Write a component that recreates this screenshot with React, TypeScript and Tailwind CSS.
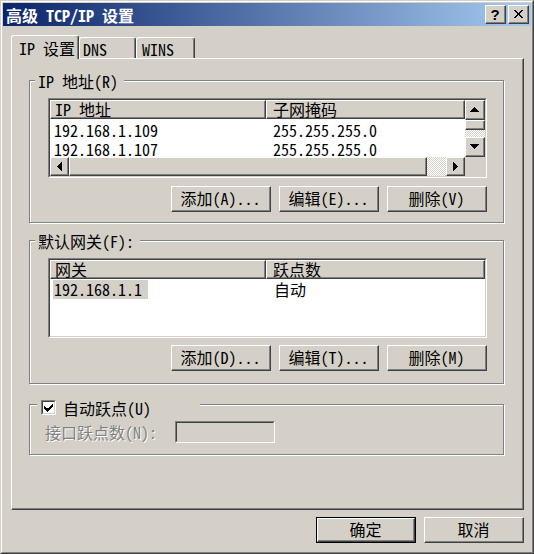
import React from "react";

const FONT = "font-['Noto_Sans_Mono_CJK_SC','Noto_Sans_CJK_SC',monospace]";

type Kids = { className?: string; inner?: string; children?: React.ReactNode };

/* Classic 3D raised frame (buttons, headers, scroll thumbs) */
function Raised({ className = "", inner = "", children }: Kids) {
  return (
    <div
      className={`border border-t-white border-l-white border-r-[#404040] border-b-[#404040] bg-[#d4d0c8] ${className}`}
    >
      <div className={`h-full w-full border-r border-b border-r-[#808080] border-b-[#808080] ${inner}`}>
        {children}
      </div>
    </div>
  );
}

/* Classic 3D sunken frame (list views, edit boxes, check boxes) */
function Sunken({ className = "", inner = "", children }: Kids) {
  return (
    <div
      className={`border border-t-[#808080] border-l-[#808080] border-r-white border-b-white ${className}`}
    >
      <div
        className={`h-full w-full overflow-hidden border border-t-[#404040] border-l-[#404040] border-r-[#d4d0c8] border-b-[#d4d0c8] ${inner}`}
      >
        {children}
      </div>
    </div>
  );
}

function Arrow({ dir }: { dir: "up" | "down" | "left" | "right" }) {
  const paths: Record<string, string> = {
    up: "M4 0h1v1h-1z M3 1h3v1h-3z M2 2h5v1h-5z M1 3h7v1h-7z M0 4h9v1h-9z",
    down: "M0 0h9v1h-9z M1 1h7v1h-7z M2 2h5v1h-5z M3 3h3v1h-3z M4 4h1v1h-1z",
    left: "M4 0h1v9h-1z M3 1h1v7h-1z M2 2h1v5h-1z M1 3h1v3h-1z M0 4h1v1h-1z",
    right: "M0 0h1v9h-1z M1 1h1v7h-1z M2 2h1v5h-1z M3 3h1v3h-1z M4 4h1v1h-1z",
  };
  const horiz = dir === "up" || dir === "down";
  return (
    <svg
      width={horiz ? 9 : 5}
      height={horiz ? 5 : 9}
      viewBox={horiz ? "0 0 9 5" : "0 0 5 9"}
      shapeRendering="crispEdges"
    >
      <path d={paths[dir]} fill="#000" />
    </svg>
  );
}

function Checker({ className = "" }: { className?: string }) {
  return (
    <div
      className={`[background-image:repeating-conic-gradient(#ffffff_0_25%,#d4d0c8_0_50%)] [background-size:2px_2px] ${className}`}
    />
  );
}

function Button({ label, isDefault = false }: { label: string; isDefault?: boolean }) {
  if (isDefault) {
    return (
      <div className="h-[26px] w-[100px] border border-black">
        <Raised className="h-full w-full" inner="flex items-center justify-center pb-px">
          {label}
        </Raised>
      </div>
    );
  }
  return (
    <Raised className="h-[26px] w-[100px]" inner="flex items-center justify-center pb-px">
      {label}
    </Raised>
  );
}

function HeaderCell({ text, className = "", pad = "pl-[4px]" }: { text: string; className?: string; pad?: string }) {
  return (
    <Raised className={`h-[19px] ${className}`} inner={`flex items-center whitespace-pre ${pad}`}>
      <span className="leading-[15px]">{text}</span>
    </Raised>
  );
}

function Group({
  label,
  className = "",
  children,
}: {
  label: React.ReactNode;
  className?: string;
  children?: React.ReactNode;
}) {
  return (
    <div
      className={`relative shrink-0 border border-[#808080] shadow-[1px_1px_0_#ffffff,inset_1px_1px_0_#ffffff] ${className}`}
    >
      {label}
      {children}
    </div>
  );
}

function GroupLabel({ text }: { text: string }) {
  return (
    <div className="absolute left-[5px] top-[-9px] flex h-[18px] items-center bg-[#d4d0c8] pl-[3px] pr-[6px] whitespace-pre">
      {text}
    </div>
  );
}

function AddressList() {
  return (
    <Sunken className="h-[80px] w-[439px]">
      <div className="flex h-full">
        <div className="flex w-[415px] flex-col">
          <div className="h-[57px] overflow-hidden bg-white">
            <div className="flex">
              <HeaderCell text="IP 地址" className="w-[216px]" />
              <HeaderCell text="子网掩码" className="w-[199px]" pad="pl-[6px]" />
            </div>
            <div className="pt-[2px]">
              {[
                ["192.168.1.109", "255.255.255.0"],
                ["192.168.1.107", "255.255.255.0"],
              ].map(([ip, mask]) => (
                <div key={ip} className="flex h-[19px] items-center leading-[15px]">
                  <div className="w-[216px] pl-[4px]">{ip}</div>
                  <div className="pl-[7px]">{mask}</div>
                </div>
              ))}
            </div>
          </div>
          {/* horizontal scroll bar */}
          <div className="flex h-[19px]">
            <Raised className="h-full w-[19px]" inner="flex items-center justify-center">
              <Arrow dir="left" />
            </Raised>
            <Raised className="h-full w-[358px]" />
            <Checker className="h-full flex-1" />
            <Raised className="h-full w-[19px]" inner="flex items-center justify-center">
              <Arrow dir="right" />
            </Raised>
          </div>
        </div>
        {/* vertical scroll bar */}
        <div className="flex w-[20px] flex-col">
          <Raised className="h-[20px] w-full" inner="flex items-center justify-center">
            <Arrow dir="up" />
          </Raised>
          <Raised className="h-[10px] w-full" />
          <Checker className="h-[7px] w-full" />
          <Raised className="h-[20px] w-full" inner="flex items-center justify-center">
            <Arrow dir="down" />
          </Raised>
          <div className="flex-1 bg-[#d4d0c8]" />
        </div>
      </div>
    </Sunken>
  );
}

function GatewayList() {
  return (
    <Sunken className="h-[80px] w-[439px]">
      <div className="h-full bg-white">
        <div className="flex">
          <HeaderCell text="网关" className="w-[216px]" />
          <HeaderCell text="跃点数" className="flex-1" pad="pl-[6px]" />
        </div>
        <div className="mt-px flex h-[19px] items-center leading-[15px]">
          <div className="w-[216px] pl-[3px]">
            <span className="flex h-[19px] w-fit items-center bg-[#d4d0c8] pl-px pr-[6px]">192.168.1.1</span>
          </div>
          <div className="pl-[8px]">自动</div>
        </div>
      </div>
    </Sunken>
  );
}

function TitleBar() {
  return (
    <div className="flex h-[23px] shrink-0 items-center bg-[linear-gradient(to_right,#0a246a,#a6caf0)] pl-[3px] pr-[2px]">
      <span className="font-bold whitespace-pre text-white">高级 TCP/IP 设置</span>
      <div className="ml-auto flex gap-[2px]">
        <Raised className="h-[19px] w-[21px]" inner="flex items-center justify-center">
          <span className="font-['Liberation_Sans',sans-serif] text-[15px] leading-none font-bold">?</span>
        </Raised>
        <Raised className="h-[19px] w-[21px]" inner="flex items-center justify-center">
          <svg width="9" height="8" viewBox="0 0 9 8" shapeRendering="crispEdges">
            <path
              d="M0 0h2v1h-2z M7 0h2v1h-2z M1 1h2v1h-2z M6 1h2v1h-2z M2 2h2v1h-2z M5 2h2v1h-2z M3 3h3v2h-3z M2 5h2v1h-2z M5 5h2v1h-2z M1 6h2v1h-2z M6 6h2v1h-2z M0 7h2v1h-2z M7 7h2v1h-2z"
              fill="#000"
            />
          </svg>
        </Raised>
      </div>
    </div>
  );
}

function Tabs() {
  const tabBase =
    "rounded-t-[3px] border-t border-l border-r border-t-white border-l-white border-r-[#404040] bg-[#d4d0c8] shadow-[inset_-1px_0_0_#808080] whitespace-pre";
  return (
    <div className="relative z-10 -mb-px ml-[8px] flex h-[24px] shrink-0 items-start">
      <div className={`h-[24px] w-[68px] pt-[3px] pl-[7px] ${tabBase}`}>IP 设置</div>
      <div className={`mt-[2px] h-[21px] w-[57px] pt-[2px] pl-[3px] ${tabBase}`}>DNS</div>
      <div className={`mt-[2px] h-[21px] w-[59px] pt-[2px] pl-[5px] ${tabBase}`}>WINS</div>
    </div>
  );
}

export default function App() {
  return (
    <div
      className={`h-[554px] w-[534px] border border-t-[#d4d0c8] border-l-[#d4d0c8] border-r-[#404040] border-b-[#404040] bg-[#d4d0c8] text-[16px] leading-[18px] text-black ${FONT}`}
    >
      <div className="flex h-full flex-col border border-t-white border-l-white border-r-[#808080] border-b-[#808080] p-px">
        <TitleBar />
        <div className="mt-[9px]" />
        <Tabs />

        {/* tab page */}
        <div className="ml-[8px] flex h-[452px] w-[513px] shrink-0 flex-col border border-t-white border-l-white border-r-[#404040] border-b-[#404040] pt-[21px] pl-[17px] shadow-[inset_-1px_-1px_0_#808080]">
          <Group label={<GroupLabel text="IP 地址(R)" />} className="h-[143px] w-[475px]">
            <div className="flex flex-col pt-[17px] pl-[18px]">
              <AddressList />
              <div className="mt-[8px] flex w-[439px] justify-end gap-[8px]">
                <Button label="添加(A)..." />
                <Button label="编辑(E)..." />
                <Button label="删除(V)" />
              </div>
            </div>
          </Group>

          <Group label={<GroupLabel text="默认网关(F):" />} className="mt-[17px] h-[144px] w-[475px]">
            <div className="flex flex-col pt-[17px] pl-[18px]">
              <GatewayList />
              <div className="mt-[7px] flex w-[439px] justify-end gap-[8px]">
                <Button label="添加(D)..." />
                <Button label="编辑(T)..." />
                <Button label="删除(M)" />
              </div>
            </div>
          </Group>

          <Group
            className="mt-[20px] h-[51px] w-[475px]"
            label={
              <div className="absolute left-[7px] top-[-7px] flex h-[19px] w-[163px] items-center bg-[#d4d0c8] pl-[4px]">
                <Sunken className="h-[15px] w-[15px] shrink-0" inner="flex items-center justify-center bg-white">
                  <svg width="9" height="8" viewBox="0 0 9 8" shapeRendering="crispEdges">
                    <path
                      d="M8 0h1v1h-1z M7 1h2v1h-2z M0 2h1v1h-1z M6 2h3v1h-3z M0 3h2v1h-2z M5 3h3v1h-3z M0 4h7v1h-7z M1 5h5v1h-5z M2 6h3v1h-3z M3 7h1v1h-1z"
                      fill="#000"
                    />
                  </svg>
                </Sunken>
                <span className="ml-[7px] whitespace-pre">自动跃点(U)</span>
              </div>
            }
          >
            <div className="flex items-center pt-[16px] pl-[15px]">
              <div className="w-[130px] whitespace-pre text-[#808080] [text-shadow:1px_1px_0_#ffffff]">
                接口跃点数(N):
              </div>
              <Sunken className="h-[22px] w-[100px]" inner="bg-[#d4d0c8]" />
            </div>
          </Group>
        </div>

        {/* dialog buttons */}
        <div className="mt-[7px] flex justify-end gap-[8px] pr-[7px]">
          <Button label="确定" isDefault />
          <Button label="取消" />
        </div>
      </div>
    </div>
  );
}
